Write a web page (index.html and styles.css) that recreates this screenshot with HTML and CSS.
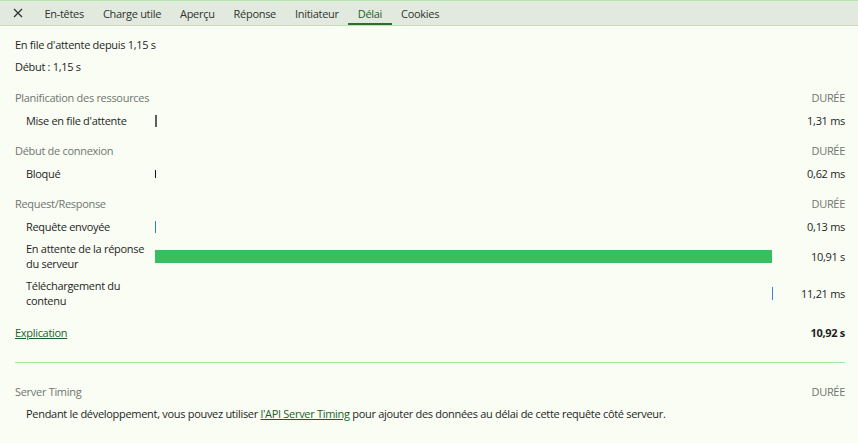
FILE: index.html
```html
<!DOCTYPE html>
<html lang="fr">
<head>
    <meta charset="UTF-8">
    <title>Délai</title>
    <link rel="stylesheet" href="styles.css">
</head>
<body>

    <div class="tabbar">
        <span class="close">
            <svg width="10" height="10" viewBox="0 0 10 10"><path d="M1 1L9 9M9 1L1 9" stroke="#333" stroke-width="1.3"/></svg>
        </span>
        <span class="tab">En-têtes</span>
        <span class="tab">Charge utile</span>
        <span class="tab">Aperçu</span>
        <span class="tab">Réponse</span>
        <span class="tab">Initiateur</span>
        <span class="tab active">Délai</span>
        <span class="tab">Cookies</span>
    </div>

    <div class="panel">
        <p class="info">En file d'attente depuis 1,15 s</p>
        <p class="info">Début : 1,15 s</p>

        <div class="timing">
            <div class="section">Planification des ressources</div>
            <div class="head-val">DURÉE</div>

            <div class="label">Mise en file d'attente</div>
            <div class="track"><span class="tick queue" style="margin-left:0%"></span></div>
            <div class="val">1,31 ms</div>

            <div class="section">Début de connexion</div>
            <div class="head-val">DURÉE</div>

            <div class="label">Bloqué</div>
            <div class="track"><span class="tick blocked" style="margin-left:0%"></span></div>
            <div class="val">0,62 ms</div>

            <div class="section">Request/Response</div>
            <div class="head-val">DURÉE</div>

            <div class="label">Requête envoyée</div>
            <div class="track"><span class="tick sent" style="margin-left:0%"></span></div>
            <div class="val">0,13 ms</div>

            <div class="label">En attente de la réponse du serveur</div>
            <div class="track"><span class="bar waiting" style="width:100%"></span></div>
            <div class="val">10,91 s</div>

            <div class="label">Téléchargement du contenu</div>
            <div class="track"><span class="tick download" style="margin-left:100%"></span></div>
            <div class="val">11,21 ms</div>

            <div class="total-label"><a href="#">Explication</a></div>
            <div class="total-val">10,92 s</div>
        </div>

        <div class="divider"></div>

        <div class="server">
            <div class="section">Server Timing</div>
            <div class="head-val">DURÉE</div>
        </div>
        <p class="note">Pendant le développement, vous pouvez utiliser <a href="#">l'API Server Timing</a> pour ajouter des données au délai de cette requête côté serveur.</p>
    </div>

</body>
</html>
```

FILE: styles.css
```css
body {
    margin: 0;
    background-color: #f9fdf4;
    font-family: "Open Sans", "Noto Sans", sans-serif;
    font-size: 11px;
    letter-spacing: -0.3px;
    color: #1f1f1f;
}
.tabbar {
    display: flex;
    align-items: stretch;
    height: 24px;
    background-color: #e2eadf;
    border-top: 1px solid #b6e6ad;
    border-bottom: 1px solid #b6e6ad;
}
.close {
    display: flex;
    align-items: center;
    padding: 0 12px 0 13px;
}
.tab {
    display: flex;
    align-items: center;
    padding: 0 9.5px;
    color: #303330;
}
.tab.active {
    color: #1d5e2a;
    box-shadow: inset 0 -2px 0 #2f6b34;
}
.panel {
    padding: 8px 13px 0 15px;
}
.info {
    margin: 0;
    line-height: 22px;
}
.timing {
    display: grid;
    grid-template-columns: 140px 1fr 73px;
    margin-top: 1px;
}
.section {
    grid-column: 1 / 3;
    color: #707570;
    line-height: 22px;
    margin-top: 8px;
}
.head-val {
    text-align: right;
    color: #707570;
    line-height: 22px;
    margin-top: 8px;
}
.label {
    display: flex;
    align-items: center;
    min-height: 23px;
    padding: 3px 8px 4px 11px;
    box-sizing: border-box;
    line-height: 15px;
}
.track {
    display: flex;
    align-items: center;
}
.val {
    display: flex;
    align-items: center;
    justify-content: flex-end;
}
.tick {
    display: block;
    flex-shrink: 0;
    width: 1px;
}
.tick.queue {
    width: 2px;
    height: 12px;
    background-color: #5f5f5f;
}
.tick.blocked {
    height: 8px;
    background-color: #111;
}
.tick.sent {
    height: 12px;
    background-color: #2b8aa6;
}
.tick.download {
    height: 13px;
    background-color: #3b7fe0;
}
.bar {
    display: block;
    height: 13px;
}
.bar.waiting {
    background-color: #37be5f;
}
.total-label {
    grid-column: 1 / 3;
    line-height: 20px;
    margin-top: 11px;
}
.total-label a,
.note a {
    color: #1d5e2a;
}
.total-val {
    text-align: right;
    font-weight: bold;
    line-height: 20px;
    margin-top: 11px;
}
.divider {
    height: 1px;
    background-color: #a9e6a1;
    margin-top: 19px;
}
.server {
    display: flex;
    justify-content: space-between;
    margin-top: 20px;
}
.server .section,
.server .head-val {
    margin-top: 0;
    line-height: 18px;
}
.note {
    margin: 4px 0 0 11px;
    line-height: 18px;
}
```
